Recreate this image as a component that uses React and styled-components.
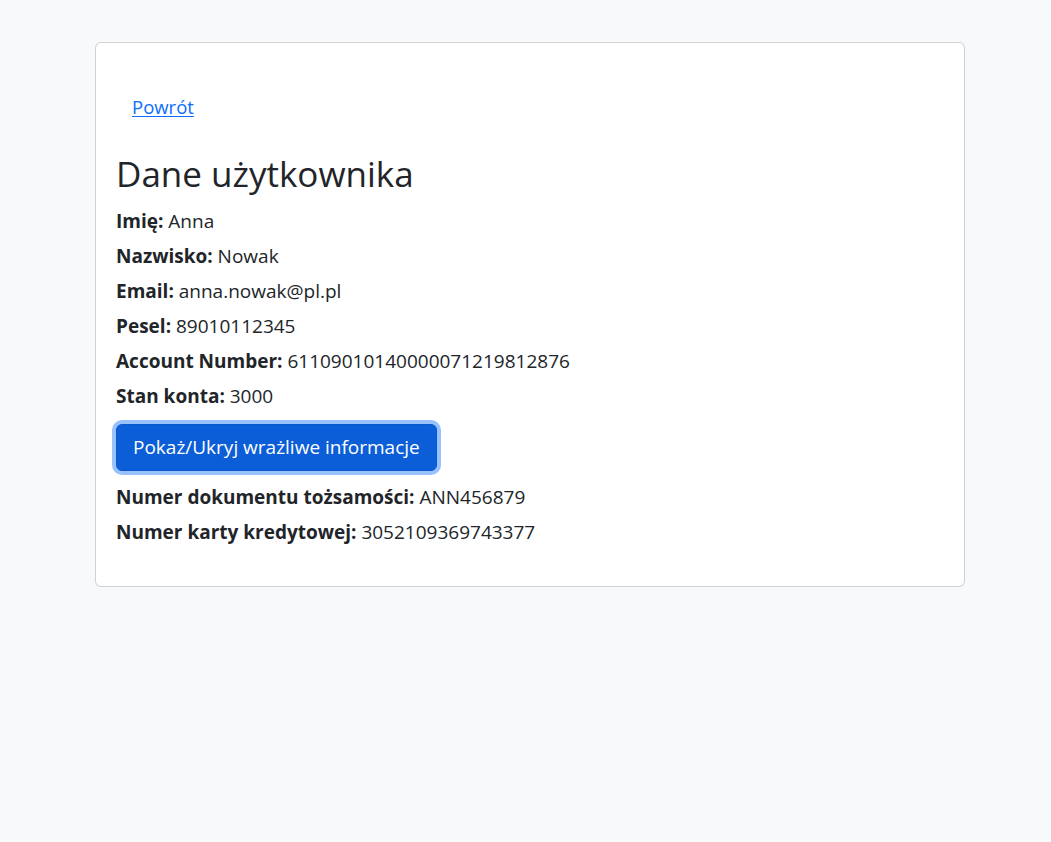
import styled, { createGlobalStyle } from "styled-components";

const GlobalStyle = createGlobalStyle`
  html, body {
    margin: 0;
    padding: 0;
    background: #f8f9fa;
    color: #212529;
    font-family: "Open Sans", "Noto Sans", "Liberation Sans", sans-serif;
  }
`;

const Page = styled.div`
  padding: 42px 86px 0 95px;
`;

const Card = styled.div`
  background: #fff;
  border: 1px solid rgba(0, 0, 0, 0.175);
  border-radius: 6px;
  padding: 20px 20px 40px 20px;
  display: flex;
  flex-direction: column;
  align-items: flex-start;
`;

const BackLink = styled.a`
  margin-top: 22px;
  padding: 8px 16px;
  font-size: 18.5px;
  line-height: 28px;
  color: #0d6efd;
  text-decoration: underline;
  text-underline-offset: 2px;
  cursor: pointer;
`;

const Title = styled.h2`
  margin: 23px 0 13px;
  font-size: 35px;
  font-weight: 400;
  line-height: 43px;
`;

const Row = styled.p`
  margin: 0 0 ${(p) => p.$gap ?? 8}px;
  font-size: 19px;
  line-height: 27px;

  strong {
    font-weight: 700;
  }
`;

const ToggleButton = styled.button`
  margin: 6px 0 13px;
  padding: 8px 16px;
  font-family: inherit;
  font-size: 19px;
  line-height: 29px;
  color: #fff;
  background: #0b5ed7;
  border: 1px solid #0a58ca;
  border-radius: 6px;
  box-shadow: 0 0 0 4px rgba(49, 132, 253, 0.5);
  cursor: pointer;
`;

const fields = [
  ["Imię", "Anna"],
  ["Nazwisko", "Nowak"],
  ["Email", "anna.nowak@pl.pl"],
  ["Pesel", "89010112345"],
  ["Account Number", "61109010140000071219812876"],
  ["Stan konta", "3000"],
];

const sensitive = [
  ["Numer dokumentu tożsamości", "ANN456879"],
  ["Numer karty kredytowej", "3052109369743377"],
];

export default function App() {
  return (
    <Page>
      <GlobalStyle />
      <Card>
        <BackLink>Powrót</BackLink>
        <Title>Dane użytkownika</Title>
        {fields.map(([label, value]) => (
          <Row key={label}>
            <strong>{label}:</strong> {value}
          </Row>
        ))}
        <ToggleButton>Pokaż/Ukryj wrażliwe informacje</ToggleButton>
        {sensitive.map(([label, value], i) => (
          <Row key={label} $gap={i === sensitive.length - 1 ? 0 : 8}>
            <strong>{label}:</strong> {value}
          </Row>
        ))}
      </Card>
    </Page>
  );
}
